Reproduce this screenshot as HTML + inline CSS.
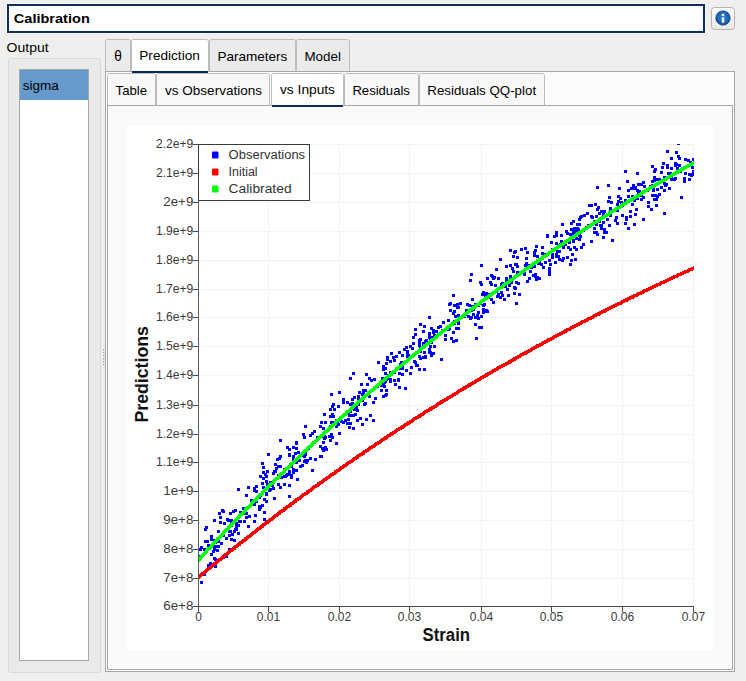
<!DOCTYPE html>
<html><head><meta charset="utf-8">
<style>
html,body{margin:0;padding:0;background:#efefef;width:746px;height:681px;overflow:hidden;}
svg{position:absolute;left:0;top:0;display:block;}
text{font-family:"Liberation Sans",sans-serif;}
.ui{font-size:13px;fill:#000;}
.tk{font-size:12px;fill:#3a3a3a;}
.lg{font-size:12px;fill:#333;}
.ttl{font-size:19.2px;font-weight:bold;fill:#111;}
</style></head>
<body>
<svg width="746" height="681" viewBox="0 0 746 681">
<defs>
<linearGradient id="btn" x1="0" y1="0" x2="0" y2="1"><stop offset="0" stop-color="#fbfbfb"/><stop offset="1" stop-color="#e8e8e8"/></linearGradient>
<radialGradient id="ico" cx="0.5" cy="0.45" r="0.6"><stop offset="0" stop-color="#3a86d6"/><stop offset="0.65" stop-color="#1c64b6"/><stop offset="1" stop-color="#0d4590"/></radialGradient>
</defs>
<!-- line edit -->
<rect x="6.5" y="3.5" width="699" height="30" fill="none" stroke="#fafafa"/>
<rect x="8" y="5" width="696" height="27" fill="#ffffff" stroke="#0a2e62" stroke-width="2"/>
<text x="13.8" y="23" class="ui" style="font-weight:bold;font-size:13.5px;fill:#000" textLength="76" lengthAdjust="spacingAndGlyphs">Calibration</text>
<!-- info button -->
<rect x="711.5" y="7.5" width="23" height="22" rx="3" fill="url(#btn)" stroke="#b4b4b4"/>
<circle cx="723" cy="18" r="7.1" fill="url(#ico)" stroke="#0b3a7e" stroke-width="0.9"/>
<rect x="721.8" y="17.4" width="2.4" height="5.3" fill="#fff"/>
<rect x="721.8" y="13.8" width="2.4" height="2.3" rx="0.6" fill="#fff"/>
<!-- Output -->
<text x="6.6" y="52" class="ui" textLength="42" lengthAdjust="spacingAndGlyphs">Output</text>
<rect x="8.5" y="58.5" width="92" height="614" rx="2" fill="#eaeaea" stroke="#d8d8d8"/>
<rect x="19.5" y="69.5" width="69" height="591" fill="#ffffff" stroke="#a8a8a8"/>
<rect x="20" y="70" width="68" height="30" fill="#6699cc"/>
<text x="22.8" y="90" class="ui" textLength="36" lengthAdjust="spacingAndGlyphs">sigma</text>
<!-- splitter dots -->
<g fill="#9a9a9a"><rect x="103" y="349" width="1.3" height="1.3"/><rect x="103" y="352" width="1.3" height="1.3"/><rect x="103" y="355" width="1.3" height="1.3"/><rect x="103" y="358" width="1.3" height="1.3"/><rect x="103" y="361" width="1.3" height="1.3"/><rect x="103" y="364" width="1.3" height="1.3"/></g>
<!-- outer tab widget pane -->
<rect x="105.5" y="71.5" width="629" height="600" fill="#fcfcfc" stroke="#a6a6a6"/>
<!-- outer tabs -->
<path d="M105.5 72 V41.5 a2 2 0 0 1 2 -2 H128.5 a2 2 0 0 1 2 2 V72" fill="#ebebeb" stroke="#bcbcbc"/>
<path d="M209.5 72 V41.5 a2 2 0 0 1 2 -2 H293.5 a2 2 0 0 1 2 2 V72" fill="#ebebeb" stroke="#bcbcbc"/>
<path d="M296.5 72 V41.5 a2 2 0 0 1 2 -2 H347.5 a2 2 0 0 1 2 2 V72" fill="#ebebeb" stroke="#bcbcbc"/>
<rect x="105" y="71" width="629" height="1" fill="#a6a6a6"/>
<path d="M131.5 72 V41.5 a2 2 0 0 1 2 -2 H206.5 a2 2 0 0 1 2 2 V72" fill="#ffffff" stroke="#bcbcbc"/>
<rect x="132" y="71" width="76" height="2" fill="#0b2b5e"/>
<text x="114.2" y="60.8" class="ui" style="font-size:14.2px" textLength="7.6" lengthAdjust="spacingAndGlyphs">θ</text>
<text x="139.3" y="60" class="ui" textLength="60.5" lengthAdjust="spacingAndGlyphs">Prediction</text>
<text x="217.4" y="61" class="ui" textLength="70" lengthAdjust="spacingAndGlyphs">Parameters</text>
<text x="304.4" y="61" class="ui" textLength="36.5" lengthAdjust="spacingAndGlyphs">Model</text>
<!-- inner tab widget pane -->
<rect x="107.5" y="105.5" width="625" height="564" fill="#fafafa" stroke="#a6a6a6"/>
<path d="M107.5 106 V75.5 a2 2 0 0 1 2 -2 H153.5 a2 2 0 0 1 2 2 V106" fill="#f8f8f8" stroke="#bcbcbc"/>
<path d="M156.5 106 V75.5 a2 2 0 0 1 2 -2 H267.5 a2 2 0 0 1 2 2 V106" fill="#f8f8f8" stroke="#bcbcbc"/>
<path d="M344.5 106 V75.5 a2 2 0 0 1 2 -2 H416.5 a2 2 0 0 1 2 2 V106" fill="#f8f8f8" stroke="#bcbcbc"/>
<path d="M419.5 106 V75.5 a2 2 0 0 1 2 -2 H542.5 a2 2 0 0 1 2 2 V106" fill="#f8f8f8" stroke="#bcbcbc"/>
<rect x="107" y="105" width="625" height="1" fill="#a6a6a6"/>
<path d="M271.5 106 V75.5 a2 2 0 0 1 2 -2 H341.5 a2 2 0 0 1 2 2 V106" fill="#ffffff" stroke="#bcbcbc"/>
<rect x="272" y="105" width="71" height="2" fill="#0b2b5e"/>
<text x="115.6" y="95" class="ui" textLength="31.5" lengthAdjust="spacingAndGlyphs">Table</text>
<text x="165" y="95" class="ui" textLength="97" lengthAdjust="spacingAndGlyphs">vs Observations</text>
<text x="280" y="94" class="ui" textLength="55" lengthAdjust="spacingAndGlyphs">vs Inputs</text>
<text x="352.4" y="95" class="ui" textLength="57.5" lengthAdjust="spacingAndGlyphs">Residuals</text>
<text x="427.3" y="95" class="ui" textLength="108.8" lengthAdjust="spacingAndGlyphs">Residuals QQ-plot</text>
<!-- chart -->
<rect x="127" y="125" width="586" height="526" fill="#ffffff"/>
<rect x="268" y="144" width="1" height="462" fill="#f3f3f3"/>
<rect x="339" y="144" width="1" height="462" fill="#f3f3f3"/>
<rect x="409" y="144" width="1" height="462" fill="#f3f3f3"/>
<rect x="481" y="144" width="1" height="462" fill="#f3f3f3"/>
<rect x="551" y="144" width="1" height="462" fill="#f3f3f3"/>
<rect x="622" y="144" width="1" height="462" fill="#f3f3f3"/>
<rect x="693" y="144" width="1" height="462" fill="#f3f3f3"/>
<rect x="198" y="606" width="496" height="1" fill="#f3f3f3"/>
<rect x="198" y="578" width="496" height="1" fill="#f3f3f3"/>
<rect x="198" y="549" width="496" height="1" fill="#f3f3f3"/>
<rect x="198" y="520" width="496" height="1" fill="#f3f3f3"/>
<rect x="198" y="491" width="496" height="1" fill="#f3f3f3"/>
<rect x="198" y="462" width="496" height="1" fill="#f3f3f3"/>
<rect x="198" y="434" width="496" height="1" fill="#f3f3f3"/>
<rect x="198" y="405" width="496" height="1" fill="#f3f3f3"/>
<rect x="198" y="375" width="496" height="1" fill="#f3f3f3"/>
<rect x="198" y="346" width="496" height="1" fill="#f3f3f3"/>
<rect x="198" y="317" width="496" height="1" fill="#f3f3f3"/>
<rect x="198" y="289" width="496" height="1" fill="#f3f3f3"/>
<rect x="198" y="260" width="496" height="1" fill="#f3f3f3"/>
<rect x="198" y="231" width="496" height="1" fill="#f3f3f3"/>
<rect x="198" y="202" width="496" height="1" fill="#f3f3f3"/>
<rect x="198" y="173" width="496" height="1" fill="#f3f3f3"/>
<rect x="198" y="144" width="496" height="1" fill="#f3f3f3"/>
<clipPath id="pc"><rect x="198" y="144" width="496" height="462"/></clipPath>
<g clip-path="url(#pc)">
<path shape-rendering="crispEdges" fill="#0000ff" d="M507 294h3v3h-3zM642 196h3v3h-3zM582 229h3v3h-3zM309 457h3v3h-3zM346 422h3v3h-3zM631 203h3v3h-3zM200 581h3v3h-3zM605 231h3v3h-3zM593 227h3v3h-3zM429 338h3v3h-3zM347 412h3v3h-3zM335 442h3v3h-3zM323 437h3v3h-3zM418 339h3v3h-3zM447 319h3v3h-3zM472 308h3v3h-3zM691 173h3v3h-3zM590 215h3v3h-3zM506 288h3v3h-3zM688 178h3v3h-3zM304 459h3v3h-3zM276 458h3v3h-3zM501 282h3v3h-3zM219 521h3v3h-3zM215 545h3v3h-3zM453 310h3v3h-3zM428 348h3v3h-3zM652 186h3v3h-3zM509 249h3v3h-3zM452 312h3v3h-3zM444 334h3v3h-3zM320 435h3v3h-3zM203 548h3v3h-3zM292 446h3v3h-3zM540 263h3v3h-3zM296 478h3v3h-3zM380 384h3v3h-3zM199 556h3v3h-3zM609 210h3v3h-3zM274 463h3v3h-3zM330 421h3v3h-3zM634 186h3v3h-3zM450 337h3v3h-3zM617 195h3v3h-3zM514 250h3v3h-3zM565 230h3v3h-3zM242 507h3v3h-3zM466 309h3v3h-3zM449 302h3v3h-3zM629 210h3v3h-3zM376 385h3v3h-3zM494 284h3v3h-3zM226 518h3v3h-3zM389 378h3v3h-3zM357 397h3v3h-3zM271 484h3v3h-3zM602 214h3v3h-3zM385 378h3v3h-3zM683 180h3v3h-3zM490 293h3v3h-3zM497 277h3v3h-3zM514 287h3v3h-3zM533 265h3v3h-3zM272 472h3v3h-3zM415 364h3v3h-3zM316 436h3v3h-3zM397 379h3v3h-3zM245 494h3v3h-3zM677 142h3v3h-3zM304 425h3v3h-3zM530 266h3v3h-3zM346 401h3v3h-3zM631 196h3v3h-3zM526 266h3v3h-3zM262 471h3v3h-3zM616 222h3v3h-3zM666 164h3v3h-3zM646 189h3v3h-3zM480 283h3v3h-3zM269 481h3v3h-3zM292 468h3v3h-3zM658 178h3v3h-3zM471 298h3v3h-3zM287 466h3v3h-3zM636 189h3v3h-3zM515 281h3v3h-3zM480 326h3v3h-3zM384 367h3v3h-3zM401 354h3v3h-3zM316 436h3v3h-3zM216 537h3v3h-3zM632 184h3v3h-3zM429 345h3v3h-3zM469 317h3v3h-3zM357 403h3v3h-3zM570 222h3v3h-3zM209 562h3v3h-3zM382 365h3v3h-3zM212 550h3v3h-3zM258 508h3v3h-3zM677 155h3v3h-3zM523 270h3v3h-3zM409 372h3v3h-3zM457 322h3v3h-3zM630 187h3v3h-3zM368 377h3v3h-3zM490 298h3v3h-3zM536 255h3v3h-3zM373 378h3v3h-3zM455 327h3v3h-3zM577 228h3v3h-3zM648 187h3v3h-3zM272 487h3v3h-3zM660 186h3v3h-3zM199 555h3v3h-3zM571 236h3v3h-3zM599 224h3v3h-3zM265 493h3v3h-3zM405 346h3v3h-3zM602 213h3v3h-3zM204 540h3v3h-3zM509 264h3v3h-3zM591 216h3v3h-3zM452 294h3v3h-3zM557 255h3v3h-3zM309 434h3v3h-3zM295 461h3v3h-3zM377 361h3v3h-3zM286 446h3v3h-3zM369 414h3v3h-3zM668 187h3v3h-3zM482 291h3v3h-3zM366 383h3v3h-3zM332 415h3v3h-3zM670 175h3v3h-3zM418 344h3v3h-3zM684 158h3v3h-3zM453 322h3v3h-3zM456 306h3v3h-3zM642 218h3v3h-3zM566 232h3v3h-3zM485 309h3v3h-3zM409 345h3v3h-3zM633 199h3v3h-3zM401 373h3v3h-3zM655 178h3v3h-3zM231 533h3v3h-3zM410 366h3v3h-3zM455 339h3v3h-3zM669 175h3v3h-3zM322 427h3v3h-3zM597 206h3v3h-3zM533 264h3v3h-3zM553 235h3v3h-3zM509 278h3v3h-3zM679 170h3v3h-3zM362 389h3v3h-3zM395 355h3v3h-3zM298 459h3v3h-3zM222 534h3v3h-3zM303 453h3v3h-3zM651 184h3v3h-3zM614 219h3v3h-3zM253 487h3v3h-3zM497 293h3v3h-3zM435 330h3v3h-3zM492 301h3v3h-3zM524 264h3v3h-3zM349 403h3v3h-3zM674 177h3v3h-3zM428 316h3v3h-3zM509 275h3v3h-3zM512 255h3v3h-3zM288 453h3v3h-3zM228 534h3v3h-3zM401 367h3v3h-3zM576 227h3v3h-3zM602 215h3v3h-3zM559 243h3v3h-3zM253 503h3v3h-3zM650 208h3v3h-3zM595 223h3v3h-3zM633 223h3v3h-3zM457 314h3v3h-3zM651 194h3v3h-3zM220 542h3v3h-3zM212 545h3v3h-3zM207 544h3v3h-3zM322 449h3v3h-3zM320 455h3v3h-3zM290 476h3v3h-3zM478 326h3v3h-3zM216 549h3v3h-3zM490 274h3v3h-3zM279 486h3v3h-3zM533 254h3v3h-3zM207 564h3v3h-3zM351 402h3v3h-3zM663 182h3v3h-3zM464 313h3v3h-3zM600 210h3v3h-3zM524 247h3v3h-3zM500 283h3v3h-3zM292 459h3v3h-3zM482 311h3v3h-3zM217 530h3v3h-3zM595 223h3v3h-3zM674 162h3v3h-3zM621 204h3v3h-3zM222 510h3v3h-3zM365 418h3v3h-3zM355 406h3v3h-3zM253 489h3v3h-3zM508 284h3v3h-3zM593 231h3v3h-3zM353 408h3v3h-3zM625 218h3v3h-3zM593 220h3v3h-3zM261 462h3v3h-3zM578 218h3v3h-3zM635 208h3v3h-3zM295 469h3v3h-3zM482 304h3v3h-3zM514 263h3v3h-3zM499 296h3v3h-3zM245 516h3v3h-3zM525 257h3v3h-3zM511 267h3v3h-3zM606 218h3v3h-3zM596 233h3v3h-3zM359 417h3v3h-3zM555 255h3v3h-3zM627 227h3v3h-3zM640 183h3v3h-3zM277 483h3v3h-3zM210 538h3v3h-3zM520 248h3v3h-3zM303 436h3v3h-3zM477 317h3v3h-3zM666 166h3v3h-3zM385 362h3v3h-3zM322 441h3v3h-3zM424 356h3v3h-3zM523 270h3v3h-3zM247 525h3v3h-3zM386 358h3v3h-3zM263 518h3v3h-3zM526 280h3v3h-3zM609 214h3v3h-3zM384 380h3v3h-3zM381 377h3v3h-3zM465 309h3v3h-3zM304 452h3v3h-3zM320 421h3v3h-3zM361 423h3v3h-3zM424 344h3v3h-3zM237 524h3v3h-3zM571 234h3v3h-3zM484 294h3v3h-3zM346 422h3v3h-3zM235 525h3v3h-3zM576 223h3v3h-3zM262 486h3v3h-3zM263 498h3v3h-3zM262 466h3v3h-3zM237 488h3v3h-3zM647 205h3v3h-3zM331 421h3v3h-3zM349 377h3v3h-3zM610 201h3v3h-3zM505 279h3v3h-3zM290 465h3v3h-3zM413 360h3v3h-3zM636 197h3v3h-3zM383 385h3v3h-3zM550 241h3v3h-3zM245 512h3v3h-3zM558 250h3v3h-3zM582 243h3v3h-3zM607 213h3v3h-3zM532 274h3v3h-3zM381 382h3v3h-3zM229 512h3v3h-3zM454 315h3v3h-3zM573 228h3v3h-3zM292 457h3v3h-3zM329 425h3v3h-3zM463 315h3v3h-3zM568 241h3v3h-3zM642 181h3v3h-3zM259 506h3v3h-3zM288 448h3v3h-3zM594 220h3v3h-3zM517 282h3v3h-3zM555 253h3v3h-3zM692 170h3v3h-3zM663 176h3v3h-3zM615 216h3v3h-3zM583 214h3v3h-3zM393 379h3v3h-3zM515 302h3v3h-3zM288 473h3v3h-3zM574 258h3v3h-3zM573 235h3v3h-3zM555 234h3v3h-3zM418 341h3v3h-3zM385 393h3v3h-3zM405 369h3v3h-3zM213 519h3v3h-3zM616 203h3v3h-3zM466 311h3v3h-3zM389 360h3v3h-3zM469 279h3v3h-3zM555 231h3v3h-3zM386 374h3v3h-3zM609 207h3v3h-3zM653 176h3v3h-3zM389 380h3v3h-3zM265 500h3v3h-3zM574 233h3v3h-3zM690 174h3v3h-3zM270 483h3v3h-3zM551 248h3v3h-3zM607 184h3v3h-3zM654 194h3v3h-3zM258 496h3v3h-3zM242 512h3v3h-3zM687 159h3v3h-3zM255 485h3v3h-3zM285 474h3v3h-3zM482 308h3v3h-3zM418 368h3v3h-3zM569 248h3v3h-3zM292 455h3v3h-3zM651 185h3v3h-3zM305 461h3v3h-3zM579 235h3v3h-3zM230 522h3v3h-3zM432 331h3v3h-3zM213 548h3v3h-3zM353 408h3v3h-3zM352 427h3v3h-3zM554 261h3v3h-3zM423 325h3v3h-3zM225 555h3v3h-3zM691 166h3v3h-3zM638 190h3v3h-3zM652 189h3v3h-3zM319 445h3v3h-3zM393 371h3v3h-3zM310 444h3v3h-3zM259 494h3v3h-3zM213 564h3v3h-3zM447 328h3v3h-3zM258 505h3v3h-3zM284 475h3v3h-3zM624 199h3v3h-3zM437 326h3v3h-3zM288 454h3v3h-3zM529 270h3v3h-3zM329 415h3v3h-3zM459 302h3v3h-3zM337 405h3v3h-3zM453 304h3v3h-3zM509 281h3v3h-3zM463 315h3v3h-3zM393 359h3v3h-3zM590 240h3v3h-3zM631 195h3v3h-3zM286 473h3v3h-3zM265 492h3v3h-3zM253 520h3v3h-3zM683 177h3v3h-3zM664 178h3v3h-3zM311 432h3v3h-3zM678 157h3v3h-3zM300 454h3v3h-3zM448 327h3v3h-3zM444 338h3v3h-3zM651 180h3v3h-3zM217 540h3v3h-3zM353 396h3v3h-3zM495 268h3v3h-3zM230 524h3v3h-3zM314 458h3v3h-3zM428 351h3v3h-3zM634 213h3v3h-3zM575 248h3v3h-3zM608 196h3v3h-3zM575 231h3v3h-3zM548 270h3v3h-3zM619 197h3v3h-3zM535 245h3v3h-3zM562 246h3v3h-3zM347 418h3v3h-3zM280 476h3v3h-3zM572 231h3v3h-3zM279 465h3v3h-3zM653 170h3v3h-3zM493 276h3v3h-3zM360 383h3v3h-3zM662 162h3v3h-3zM274 470h3v3h-3zM452 340h3v3h-3zM242 512h3v3h-3zM676 167h3v3h-3zM483 303h3v3h-3zM596 208h3v3h-3zM337 423h3v3h-3zM595 231h3v3h-3zM546 235h3v3h-3zM516 265h3v3h-3zM669 172h3v3h-3zM412 342h3v3h-3zM403 348h3v3h-3zM541 252h3v3h-3zM611 239h3v3h-3zM363 403h3v3h-3zM529 270h3v3h-3zM301 464h3v3h-3zM471 305h3v3h-3zM579 216h3v3h-3zM229 530h3v3h-3zM558 258h3v3h-3zM205 526h3v3h-3zM673 178h3v3h-3zM430 354h3v3h-3zM400 361h3v3h-3zM555 242h3v3h-3zM457 327h3v3h-3zM560 234h3v3h-3zM239 520h3v3h-3zM476 314h3v3h-3zM474 303h3v3h-3zM660 171h3v3h-3zM217 545h3v3h-3zM422 342h3v3h-3zM510 279h3v3h-3zM470 273h3v3h-3zM234 528h3v3h-3zM491 275h3v3h-3zM307 447h3v3h-3zM294 460h3v3h-3zM633 187h3v3h-3zM295 447h3v3h-3zM422 330h3v3h-3zM569 233h3v3h-3zM548 259h3v3h-3zM472 313h3v3h-3zM598 212h3v3h-3zM428 334h3v3h-3zM505 265h3v3h-3zM603 210h3v3h-3zM534 249h3v3h-3zM516 256h3v3h-3zM399 363h3v3h-3zM474 323h3v3h-3zM394 383h3v3h-3zM566 256h3v3h-3zM386 356h3v3h-3zM429 351h3v3h-3zM572 220h3v3h-3zM447 319h3v3h-3zM365 373h3v3h-3zM607 200h3v3h-3zM386 377h3v3h-3zM616 209h3v3h-3zM587 224h3v3h-3zM419 346h3v3h-3zM551 256h3v3h-3zM214 540h3v3h-3zM390 352h3v3h-3zM624 222h3v3h-3zM485 294h3v3h-3zM474 316h3v3h-3zM527 264h3v3h-3zM533 251h3v3h-3zM487 296h3v3h-3zM406 350h3v3h-3zM288 484h3v3h-3zM342 401h3v3h-3zM342 421h3v3h-3zM411 347h3v3h-3zM693 159h3v3h-3zM372 419h3v3h-3zM419 357h3v3h-3zM381 377h3v3h-3zM486 277h3v3h-3zM667 172h3v3h-3zM638 190h3v3h-3zM384 394h3v3h-3zM329 408h3v3h-3zM636 172h3v3h-3zM442 329h3v3h-3zM537 262h3v3h-3zM233 539h3v3h-3zM627 189h3v3h-3zM352 372h3v3h-3zM442 321h3v3h-3zM295 442h3v3h-3zM406 353h3v3h-3zM608 224h3v3h-3zM608 196h3v3h-3zM432 352h3v3h-3zM578 234h3v3h-3zM424 340h3v3h-3zM382 368h3v3h-3zM468 304h3v3h-3zM297 451h3v3h-3zM354 413h3v3h-3zM548 267h3v3h-3zM579 230h3v3h-3zM225 537h3v3h-3zM561 259h3v3h-3zM603 231h3v3h-3zM418 355h3v3h-3zM228 548h3v3h-3zM536 276h3v3h-3zM319 455h3v3h-3zM516 271h3v3h-3zM384 372h3v3h-3zM513 251h3v3h-3zM325 448h3v3h-3zM433 345h3v3h-3zM457 306h3v3h-3zM510 281h3v3h-3zM298 459h3v3h-3zM675 151h3v3h-3zM340 420h3v3h-3zM349 422h3v3h-3zM324 446h3v3h-3zM230 519h3v3h-3zM407 354h3v3h-3zM580 246h3v3h-3zM549 263h3v3h-3zM294 452h3v3h-3zM265 480h3v3h-3zM356 409h3v3h-3zM578 223h3v3h-3zM439 325h3v3h-3zM655 204h3v3h-3zM523 273h3v3h-3zM505 277h3v3h-3zM578 238h3v3h-3zM569 263h3v3h-3zM368 395h3v3h-3zM324 421h3v3h-3zM414 333h3v3h-3zM440 358h3v3h-3zM267 453h3v3h-3zM416 364h3v3h-3zM515 263h3v3h-3zM264 473h3v3h-3zM265 475h3v3h-3zM283 468h3v3h-3zM338 432h3v3h-3zM674 164h3v3h-3zM210 553h3v3h-3zM288 495h3v3h-3zM279 439h3v3h-3zM432 329h3v3h-3zM204 528h3v3h-3zM424 355h3v3h-3zM278 457h3v3h-3zM331 405h3v3h-3zM590 204h3v3h-3zM288 465h3v3h-3zM503 298h3v3h-3zM399 367h3v3h-3zM404 387h3v3h-3zM602 236h3v3h-3zM277 474h3v3h-3zM656 195h3v3h-3zM640 194h3v3h-3zM529 266h3v3h-3zM221 509h3v3h-3zM526 251h3v3h-3zM495 290h3v3h-3zM580 215h3v3h-3zM303 460h3v3h-3zM670 178h3v3h-3zM637 183h3v3h-3zM254 514h3v3h-3zM353 407h3v3h-3zM213 557h3v3h-3zM609 209h3v3h-3zM651 165h3v3h-3zM688 173h3v3h-3zM501 282h3v3h-3zM528 277h3v3h-3zM534 275h3v3h-3zM480 315h3v3h-3zM670 157h3v3h-3zM499 258h3v3h-3zM364 389h3v3h-3zM452 331h3v3h-3zM206 540h3v3h-3zM556 250h3v3h-3zM541 246h3v3h-3zM406 355h3v3h-3zM620 201h3v3h-3zM572 228h3v3h-3zM364 402h3v3h-3zM235 522h3v3h-3zM263 511h3v3h-3zM288 470h3v3h-3zM348 426h3v3h-3zM419 350h3v3h-3zM658 193h3v3h-3zM335 419h3v3h-3zM643 185h3v3h-3zM535 278h3v3h-3zM621 214h3v3h-3zM397 378h3v3h-3zM199 548h3v3h-3zM588 204h3v3h-3zM319 425h3v3h-3zM268 489h3v3h-3zM594 203h3v3h-3zM538 277h3v3h-3zM302 433h3v3h-3zM330 433h3v3h-3zM663 212h3v3h-3zM330 393h3v3h-3zM546 234h3v3h-3zM261 504h3v3h-3zM602 214h3v3h-3zM255 500h3v3h-3zM453 320h3v3h-3zM214 558h3v3h-3zM470 316h3v3h-3zM617 200h3v3h-3zM239 511h3v3h-3zM333 408h3v3h-3zM577 231h3v3h-3zM499 258h3v3h-3zM352 414h3v3h-3zM509 276h3v3h-3zM423 368h3v3h-3zM625 216h3v3h-3zM342 398h3v3h-3zM573 246h3v3h-3zM512 270h3v3h-3zM564 241h3v3h-3zM385 389h3v3h-3zM557 250h3v3h-3zM544 261h3v3h-3zM389 379h3v3h-3zM210 535h3v3h-3zM675 163h3v3h-3zM551 256h3v3h-3zM299 465h3v3h-3zM560 240h3v3h-3zM335 421h3v3h-3zM430 327h3v3h-3zM624 170h3v3h-3zM419 338h3v3h-3zM340 416h3v3h-3zM349 410h3v3h-3zM235 528h3v3h-3zM306 459h3v3h-3zM331 436h3v3h-3zM283 475h3v3h-3zM228 530h3v3h-3zM428 332h3v3h-3zM303 455h3v3h-3zM564 243h3v3h-3zM655 198h3v3h-3zM332 403h3v3h-3zM481 293h3v3h-3zM448 303h3v3h-3zM234 509h3v3h-3zM259 475h3v3h-3zM636 197h3v3h-3zM432 329h3v3h-3zM596 186h3v3h-3zM230 538h3v3h-3zM492 277h3v3h-3zM626 180h3v3h-3zM627 195h3v3h-3zM200 546h3v3h-3zM456 303h3v3h-3zM380 389h3v3h-3zM574 229h3v3h-3zM233 530h3v3h-3zM328 435h3v3h-3zM600 224h3v3h-3zM430 341h3v3h-3zM422 344h3v3h-3zM678 164h3v3h-3zM356 419h3v3h-3zM218 512h3v3h-3zM392 356h3v3h-3zM273 470h3v3h-3zM238 520h3v3h-3zM479 302h3v3h-3zM670 167h3v3h-3zM485 292h3v3h-3zM518 293h3v3h-3zM358 391h3v3h-3zM480 264h3v3h-3zM570 259h3v3h-3zM489 281h3v3h-3zM595 215h3v3h-3zM470 309h3v3h-3zM295 441h3v3h-3zM486 310h3v3h-3zM441 329h3v3h-3zM279 455h3v3h-3zM504 285h3v3h-3zM602 221h3v3h-3zM264 487h3v3h-3zM467 315h3v3h-3zM561 223h3v3h-3zM397 378h3v3h-3zM331 413h3v3h-3zM382 395h3v3h-3zM466 303h3v3h-3zM538 260h3v3h-3zM475 337h3v3h-3zM250 502h3v3h-3zM603 228h3v3h-3zM656 188h3v3h-3zM247 486h3v3h-3zM321 447h3v3h-3zM283 483h3v3h-3zM618 187h3v3h-3zM649 185h3v3h-3zM219 516h3v3h-3zM362 392h3v3h-3zM292 471h3v3h-3zM430 340h3v3h-3zM654 168h3v3h-3zM232 510h3v3h-3zM282 471h3v3h-3zM439 332h3v3h-3zM457 319h3v3h-3zM567 246h3v3h-3zM414 328h3v3h-3zM267 485h3v3h-3zM372 401h3v3h-3zM684 172h3v3h-3zM570 228h3v3h-3zM255 490h3v3h-3zM598 220h3v3h-3zM351 414h3v3h-3zM585 226h3v3h-3zM203 573h3v3h-3zM629 215h3v3h-3zM277 465h3v3h-3zM423 351h3v3h-3zM525 262h3v3h-3zM449 309h3v3h-3zM279 465h3v3h-3zM266 486h3v3h-3zM338 391h3v3h-3zM223 522h3v3h-3zM304 453h3v3h-3zM261 482h3v3h-3zM428 336h3v3h-3zM374 397h3v3h-3zM488 293h3v3h-3zM336 421h3v3h-3zM214 565h3v3h-3zM361 399h3v3h-3zM572 239h3v3h-3zM324 436h3v3h-3zM398 386h3v3h-3zM572 240h3v3h-3zM399 365h3v3h-3zM637 192h3v3h-3zM653 198h3v3h-3zM351 398h3v3h-3zM562 257h3v3h-3zM323 435h3v3h-3zM266 470h3v3h-3zM414 361h3v3h-3zM496 295h3v3h-3zM661 166h3v3h-3zM269 488h3v3h-3zM551 253h3v3h-3zM433 334h3v3h-3zM262 477h3v3h-3zM680 196h3v3h-3zM542 266h3v3h-3zM261 504h3v3h-3zM647 201h3v3h-3zM248 515h3v3h-3zM243 520h3v3h-3zM361 393h3v3h-3zM663 189h3v3h-3zM213 539h3v3h-3zM653 179h3v3h-3zM501 294h3v3h-3zM230 521h3v3h-3zM479 281h3v3h-3zM425 339h3v3h-3zM477 311h3v3h-3zM563 242h3v3h-3zM534 273h3v3h-3zM692 158h3v3h-3zM275 467h3v3h-3zM600 227h3v3h-3zM401 365h3v3h-3zM586 212h3v3h-3zM640 198h3v3h-3zM689 161h3v3h-3zM329 439h3v3h-3zM422 356h3v3h-3zM665 183h3v3h-3zM666 150h3v3h-3zM382 384h3v3h-3zM664 184h3v3h-3zM398 372h3v3h-3zM383 380h3v3h-3zM573 227h3v3h-3zM431 336h3v3h-3zM419 323h3v3h-3zM389 371h3v3h-3zM412 336h3v3h-3zM266 483h3v3h-3zM227 519h3v3h-3zM571 253h3v3h-3zM477 304h3v3h-3zM530 264h3v3h-3zM595 223h3v3h-3zM311 469h3v3h-3zM313 430h3v3h-3zM335 425h3v3h-3zM348 414h3v3h-3zM575 237h3v3h-3zM383 381h3v3h-3zM357 395h3v3h-3zM513 292h3v3h-3zM290 474h3v3h-3zM250 499h3v3h-3zM543 253h3v3h-3zM572 239h3v3h-3zM344 419h3v3h-3zM513 286h3v3h-3zM214 541h3v3h-3zM398 351h3v3h-3zM484 310h3v3h-3zM323 413h3v3h-3zM370 379h3v3h-3zM500 291h3v3h-3zM490 283h3v3h-3zM273 497h3v3h-3zM548 273h3v3h-3zM237 532h3v3h-3z"/>
<path shape-rendering="crispEdges" fill="#ff0000" d="M197 576h3v3h-3zM198 575h3v3h-3zM199 574h3v3h-3zM199 574h3v3h-3zM200 573h3v3h-3zM201 572h3v3h-3zM202 572h3v3h-3zM203 571h3v3h-3zM204 570h3v3h-3zM205 569h3v3h-3zM205 569h3v3h-3zM206 568h3v3h-3zM207 567h3v3h-3zM208 567h3v3h-3zM209 566h3v3h-3zM210 565h3v3h-3zM210 565h3v3h-3zM211 564h3v3h-3zM212 563h3v3h-3zM213 562h3v3h-3zM214 562h3v3h-3zM215 561h3v3h-3zM216 560h3v3h-3zM216 560h3v3h-3zM217 559h3v3h-3zM218 558h3v3h-3zM219 558h3v3h-3zM220 557h3v3h-3zM221 556h3v3h-3zM222 556h3v3h-3zM222 555h3v3h-3zM223 554h3v3h-3zM224 553h3v3h-3zM225 553h3v3h-3zM226 552h3v3h-3zM227 551h3v3h-3zM227 551h3v3h-3zM228 550h3v3h-3zM229 549h3v3h-3zM230 549h3v3h-3zM231 548h3v3h-3zM232 547h3v3h-3zM233 547h3v3h-3zM233 546h3v3h-3zM234 545h3v3h-3zM235 545h3v3h-3zM236 544h3v3h-3zM237 543h3v3h-3zM238 543h3v3h-3zM238 542h3v3h-3zM239 541h3v3h-3zM240 541h3v3h-3zM241 540h3v3h-3zM242 539h3v3h-3zM243 539h3v3h-3zM244 538h3v3h-3zM244 537h3v3h-3zM245 537h3v3h-3zM246 536h3v3h-3zM247 535h3v3h-3zM248 535h3v3h-3zM249 534h3v3h-3zM250 533h3v3h-3zM250 533h3v3h-3zM251 532h3v3h-3zM252 531h3v3h-3zM253 531h3v3h-3zM254 530h3v3h-3zM255 529h3v3h-3zM255 529h3v3h-3zM256 528h3v3h-3zM257 527h3v3h-3zM258 527h3v3h-3zM259 526h3v3h-3zM260 525h3v3h-3zM261 525h3v3h-3zM261 524h3v3h-3zM262 523h3v3h-3zM263 523h3v3h-3zM264 522h3v3h-3zM265 521h3v3h-3zM266 521h3v3h-3zM266 520h3v3h-3zM267 520h3v3h-3zM268 519h3v3h-3zM269 518h3v3h-3zM270 518h3v3h-3zM271 517h3v3h-3zM272 516h3v3h-3zM272 516h3v3h-3zM273 515h3v3h-3zM274 514h3v3h-3zM275 514h3v3h-3zM276 513h3v3h-3zM277 512h3v3h-3zM278 512h3v3h-3zM278 511h3v3h-3zM279 510h3v3h-3zM280 510h3v3h-3zM281 509h3v3h-3zM282 509h3v3h-3zM283 508h3v3h-3zM283 507h3v3h-3zM284 507h3v3h-3zM285 506h3v3h-3zM286 505h3v3h-3zM287 505h3v3h-3zM288 504h3v3h-3zM289 504h3v3h-3zM289 503h3v3h-3zM290 502h3v3h-3zM291 502h3v3h-3zM292 501h3v3h-3zM293 500h3v3h-3zM294 500h3v3h-3zM294 499h3v3h-3zM295 498h3v3h-3zM296 498h3v3h-3zM297 497h3v3h-3zM298 497h3v3h-3zM299 496h3v3h-3zM300 495h3v3h-3zM300 495h3v3h-3zM301 494h3v3h-3zM302 493h3v3h-3zM303 493h3v3h-3zM304 492h3v3h-3zM305 492h3v3h-3zM306 491h3v3h-3zM306 490h3v3h-3zM307 490h3v3h-3zM308 489h3v3h-3zM309 489h3v3h-3zM310 488h3v3h-3zM311 487h3v3h-3zM311 487h3v3h-3zM312 486h3v3h-3zM313 485h3v3h-3zM314 485h3v3h-3zM315 484h3v3h-3zM316 484h3v3h-3zM317 483h3v3h-3zM317 482h3v3h-3zM318 482h3v3h-3zM319 481h3v3h-3zM320 481h3v3h-3zM321 480h3v3h-3zM322 479h3v3h-3zM322 479h3v3h-3zM323 478h3v3h-3zM324 478h3v3h-3zM325 477h3v3h-3zM326 476h3v3h-3zM327 476h3v3h-3zM328 475h3v3h-3zM328 475h3v3h-3zM329 474h3v3h-3zM330 473h3v3h-3zM331 473h3v3h-3zM332 472h3v3h-3zM333 472h3v3h-3zM334 471h3v3h-3zM334 470h3v3h-3zM335 470h3v3h-3zM336 469h3v3h-3zM337 469h3v3h-3zM338 468h3v3h-3zM339 467h3v3h-3zM339 467h3v3h-3zM340 466h3v3h-3zM341 466h3v3h-3zM342 465h3v3h-3zM343 464h3v3h-3zM344 464h3v3h-3zM345 463h3v3h-3zM345 463h3v3h-3zM346 462h3v3h-3zM347 461h3v3h-3zM348 461h3v3h-3zM349 460h3v3h-3zM350 460h3v3h-3zM351 459h3v3h-3zM351 459h3v3h-3zM352 458h3v3h-3zM353 457h3v3h-3zM354 457h3v3h-3zM355 456h3v3h-3zM356 456h3v3h-3zM356 455h3v3h-3zM357 454h3v3h-3zM358 454h3v3h-3zM359 453h3v3h-3zM360 453h3v3h-3zM361 452h3v3h-3zM362 452h3v3h-3zM362 451h3v3h-3zM363 450h3v3h-3zM364 450h3v3h-3zM365 449h3v3h-3zM366 449h3v3h-3zM367 448h3v3h-3zM367 448h3v3h-3zM368 447h3v3h-3zM369 446h3v3h-3zM370 446h3v3h-3zM371 445h3v3h-3zM372 445h3v3h-3zM373 444h3v3h-3zM373 444h3v3h-3zM374 443h3v3h-3zM375 442h3v3h-3zM376 442h3v3h-3zM377 441h3v3h-3zM378 441h3v3h-3zM379 440h3v3h-3zM379 440h3v3h-3zM380 439h3v3h-3zM381 438h3v3h-3zM382 438h3v3h-3zM383 437h3v3h-3zM384 437h3v3h-3zM384 436h3v3h-3zM385 436h3v3h-3zM386 435h3v3h-3zM387 434h3v3h-3zM388 434h3v3h-3zM389 433h3v3h-3zM390 433h3v3h-3zM390 432h3v3h-3zM391 432h3v3h-3zM392 431h3v3h-3zM393 431h3v3h-3zM394 430h3v3h-3zM395 429h3v3h-3zM395 429h3v3h-3zM396 428h3v3h-3zM397 428h3v3h-3zM398 427h3v3h-3zM399 427h3v3h-3zM400 426h3v3h-3zM401 426h3v3h-3zM401 425h3v3h-3zM402 425h3v3h-3zM403 424h3v3h-3zM404 423h3v3h-3zM405 423h3v3h-3zM406 422h3v3h-3zM407 422h3v3h-3zM407 421h3v3h-3zM408 421h3v3h-3zM409 420h3v3h-3zM410 420h3v3h-3zM411 419h3v3h-3zM412 418h3v3h-3zM412 418h3v3h-3zM413 417h3v3h-3zM414 417h3v3h-3zM415 416h3v3h-3zM416 416h3v3h-3zM417 415h3v3h-3zM418 415h3v3h-3zM418 414h3v3h-3zM419 414h3v3h-3zM420 413h3v3h-3zM421 413h3v3h-3zM422 412h3v3h-3zM423 411h3v3h-3zM423 411h3v3h-3zM424 410h3v3h-3zM425 410h3v3h-3zM426 409h3v3h-3zM427 409h3v3h-3zM428 408h3v3h-3zM429 408h3v3h-3zM429 407h3v3h-3zM430 407h3v3h-3zM431 406h3v3h-3zM432 406h3v3h-3zM433 405h3v3h-3zM434 405h3v3h-3zM435 404h3v3h-3zM435 404h3v3h-3zM436 403h3v3h-3zM437 402h3v3h-3zM438 402h3v3h-3zM439 401h3v3h-3zM440 401h3v3h-3zM440 400h3v3h-3zM441 400h3v3h-3zM442 399h3v3h-3zM443 399h3v3h-3zM444 398h3v3h-3zM445 398h3v3h-3zM446 397h3v3h-3zM446 397h3v3h-3zM447 396h3v3h-3zM448 396h3v3h-3zM449 395h3v3h-3zM450 395h3v3h-3zM451 394h3v3h-3zM451 394h3v3h-3zM452 393h3v3h-3zM453 393h3v3h-3zM454 392h3v3h-3zM455 392h3v3h-3zM456 391h3v3h-3zM457 390h3v3h-3zM457 390h3v3h-3zM458 389h3v3h-3zM459 389h3v3h-3zM460 388h3v3h-3zM461 388h3v3h-3zM462 387h3v3h-3zM463 387h3v3h-3zM463 386h3v3h-3zM464 386h3v3h-3zM465 385h3v3h-3zM466 385h3v3h-3zM467 384h3v3h-3zM468 384h3v3h-3zM468 383h3v3h-3zM469 383h3v3h-3zM470 382h3v3h-3zM471 382h3v3h-3zM472 381h3v3h-3zM473 381h3v3h-3zM474 380h3v3h-3zM474 380h3v3h-3zM475 379h3v3h-3zM476 379h3v3h-3zM477 378h3v3h-3zM478 378h3v3h-3zM479 377h3v3h-3zM479 377h3v3h-3zM480 376h3v3h-3zM481 376h3v3h-3zM482 375h3v3h-3zM483 375h3v3h-3zM484 374h3v3h-3zM485 374h3v3h-3zM485 373h3v3h-3zM486 373h3v3h-3zM487 372h3v3h-3zM488 372h3v3h-3zM489 371h3v3h-3zM490 371h3v3h-3zM491 370h3v3h-3zM491 370h3v3h-3zM492 369h3v3h-3zM493 369h3v3h-3zM494 368h3v3h-3zM495 368h3v3h-3zM496 367h3v3h-3zM496 367h3v3h-3zM497 366h3v3h-3zM498 366h3v3h-3zM499 365h3v3h-3zM500 365h3v3h-3zM501 364h3v3h-3zM502 364h3v3h-3zM502 364h3v3h-3zM503 363h3v3h-3zM504 363h3v3h-3zM505 362h3v3h-3zM506 362h3v3h-3zM507 361h3v3h-3zM508 361h3v3h-3zM508 360h3v3h-3zM509 360h3v3h-3zM510 359h3v3h-3zM511 359h3v3h-3zM512 358h3v3h-3zM513 358h3v3h-3zM513 357h3v3h-3zM514 357h3v3h-3zM515 356h3v3h-3zM516 356h3v3h-3zM517 355h3v3h-3zM518 355h3v3h-3zM519 354h3v3h-3zM519 354h3v3h-3zM520 353h3v3h-3zM521 353h3v3h-3zM522 352h3v3h-3zM523 352h3v3h-3zM524 352h3v3h-3zM524 351h3v3h-3zM525 351h3v3h-3zM526 350h3v3h-3zM527 350h3v3h-3zM528 349h3v3h-3zM529 349h3v3h-3zM530 348h3v3h-3zM530 348h3v3h-3zM531 347h3v3h-3zM532 347h3v3h-3zM533 346h3v3h-3zM534 346h3v3h-3zM535 345h3v3h-3zM536 345h3v3h-3zM536 344h3v3h-3zM537 344h3v3h-3zM538 344h3v3h-3zM539 343h3v3h-3zM540 343h3v3h-3zM541 342h3v3h-3zM541 342h3v3h-3zM542 341h3v3h-3zM543 341h3v3h-3zM544 340h3v3h-3zM545 340h3v3h-3zM546 339h3v3h-3zM547 339h3v3h-3zM547 338h3v3h-3zM548 338h3v3h-3zM549 338h3v3h-3zM550 337h3v3h-3zM551 337h3v3h-3zM552 336h3v3h-3zM552 336h3v3h-3zM553 335h3v3h-3zM554 335h3v3h-3zM555 334h3v3h-3zM556 334h3v3h-3zM557 333h3v3h-3zM558 333h3v3h-3zM558 333h3v3h-3zM559 332h3v3h-3zM560 332h3v3h-3zM561 331h3v3h-3zM562 331h3v3h-3zM563 330h3v3h-3zM564 330h3v3h-3zM564 329h3v3h-3zM565 329h3v3h-3zM566 328h3v3h-3zM567 328h3v3h-3zM568 328h3v3h-3zM569 327h3v3h-3zM569 327h3v3h-3zM570 326h3v3h-3zM571 326h3v3h-3zM572 325h3v3h-3zM573 325h3v3h-3zM574 324h3v3h-3zM575 324h3v3h-3zM575 324h3v3h-3zM576 323h3v3h-3zM577 323h3v3h-3zM578 322h3v3h-3zM579 322h3v3h-3zM580 321h3v3h-3zM580 321h3v3h-3zM581 320h3v3h-3zM582 320h3v3h-3zM583 320h3v3h-3zM584 319h3v3h-3zM585 319h3v3h-3zM586 318h3v3h-3zM586 318h3v3h-3zM587 317h3v3h-3zM588 317h3v3h-3zM589 317h3v3h-3zM590 316h3v3h-3zM591 316h3v3h-3zM592 315h3v3h-3zM592 315h3v3h-3zM593 314h3v3h-3zM594 314h3v3h-3zM595 313h3v3h-3zM596 313h3v3h-3zM597 313h3v3h-3zM597 312h3v3h-3zM598 312h3v3h-3zM599 311h3v3h-3zM600 311h3v3h-3zM601 310h3v3h-3zM602 310h3v3h-3zM603 310h3v3h-3zM603 309h3v3h-3zM604 309h3v3h-3zM605 308h3v3h-3zM606 308h3v3h-3zM607 307h3v3h-3zM608 307h3v3h-3zM608 307h3v3h-3zM609 306h3v3h-3zM610 306h3v3h-3zM611 305h3v3h-3zM612 305h3v3h-3zM613 304h3v3h-3zM614 304h3v3h-3zM614 304h3v3h-3zM615 303h3v3h-3zM616 303h3v3h-3zM617 302h3v3h-3zM618 302h3v3h-3zM619 302h3v3h-3zM620 301h3v3h-3zM620 301h3v3h-3zM621 300h3v3h-3zM622 300h3v3h-3zM623 299h3v3h-3zM624 299h3v3h-3zM625 299h3v3h-3zM625 298h3v3h-3zM626 298h3v3h-3zM627 297h3v3h-3zM628 297h3v3h-3zM629 296h3v3h-3zM630 296h3v3h-3zM631 296h3v3h-3zM631 295h3v3h-3zM632 295h3v3h-3zM633 294h3v3h-3zM634 294h3v3h-3zM635 294h3v3h-3zM636 293h3v3h-3zM636 293h3v3h-3zM637 292h3v3h-3zM638 292h3v3h-3zM639 292h3v3h-3zM640 291h3v3h-3zM641 291h3v3h-3zM642 290h3v3h-3zM642 290h3v3h-3zM643 289h3v3h-3zM644 289h3v3h-3zM645 289h3v3h-3zM646 288h3v3h-3zM647 288h3v3h-3zM648 287h3v3h-3zM648 287h3v3h-3zM649 287h3v3h-3zM650 286h3v3h-3zM651 286h3v3h-3zM652 285h3v3h-3zM653 285h3v3h-3zM653 285h3v3h-3zM654 284h3v3h-3zM655 284h3v3h-3zM656 283h3v3h-3zM657 283h3v3h-3zM658 283h3v3h-3zM659 282h3v3h-3zM659 282h3v3h-3zM660 281h3v3h-3zM661 281h3v3h-3zM662 281h3v3h-3zM663 280h3v3h-3zM664 280h3v3h-3zM665 279h3v3h-3zM665 279h3v3h-3zM666 279h3v3h-3zM667 278h3v3h-3zM668 278h3v3h-3zM669 277h3v3h-3zM670 277h3v3h-3zM670 277h3v3h-3zM671 276h3v3h-3zM672 276h3v3h-3zM673 275h3v3h-3zM674 275h3v3h-3zM675 275h3v3h-3zM676 274h3v3h-3zM676 274h3v3h-3zM677 273h3v3h-3zM678 273h3v3h-3zM679 273h3v3h-3zM680 272h3v3h-3zM681 272h3v3h-3zM681 272h3v3h-3zM682 271h3v3h-3zM683 271h3v3h-3zM684 270h3v3h-3zM685 270h3v3h-3zM686 270h3v3h-3zM687 269h3v3h-3zM687 269h3v3h-3zM688 268h3v3h-3zM689 268h3v3h-3zM690 268h3v3h-3zM691 267h3v3h-3zM692 267h3v3h-3zM693 266h3v3h-3z"/>
<path shape-rendering="crispEdges" fill="#00ff00" d="M197 559h3v3h-3zM198 558h3v3h-3zM199 557h3v3h-3zM199 556h3v3h-3zM200 555h3v3h-3zM201 554h3v3h-3zM202 553h3v3h-3zM203 552h3v3h-3zM204 551h3v3h-3zM205 550h3v3h-3zM205 549h3v3h-3zM206 548h3v3h-3zM207 547h3v3h-3zM208 547h3v3h-3zM209 546h3v3h-3zM210 545h3v3h-3zM210 544h3v3h-3zM211 543h3v3h-3zM212 542h3v3h-3zM213 541h3v3h-3zM214 540h3v3h-3zM215 539h3v3h-3zM216 538h3v3h-3zM216 537h3v3h-3zM217 537h3v3h-3zM218 536h3v3h-3zM219 535h3v3h-3zM220 534h3v3h-3zM221 533h3v3h-3zM222 532h3v3h-3zM222 531h3v3h-3zM223 530h3v3h-3zM224 529h3v3h-3zM225 528h3v3h-3zM226 528h3v3h-3zM227 527h3v3h-3zM227 526h3v3h-3zM228 525h3v3h-3zM229 524h3v3h-3zM230 523h3v3h-3zM231 522h3v3h-3zM232 521h3v3h-3zM233 520h3v3h-3zM233 520h3v3h-3zM234 519h3v3h-3zM235 518h3v3h-3zM236 517h3v3h-3zM237 516h3v3h-3zM238 515h3v3h-3zM238 514h3v3h-3zM239 513h3v3h-3zM240 513h3v3h-3zM241 512h3v3h-3zM242 511h3v3h-3zM243 510h3v3h-3zM244 509h3v3h-3zM244 508h3v3h-3zM245 507h3v3h-3zM246 506h3v3h-3zM247 506h3v3h-3zM248 505h3v3h-3zM249 504h3v3h-3zM250 503h3v3h-3zM250 502h3v3h-3zM251 501h3v3h-3zM252 500h3v3h-3zM253 499h3v3h-3zM254 499h3v3h-3zM255 498h3v3h-3zM255 497h3v3h-3zM256 496h3v3h-3zM257 495h3v3h-3zM258 494h3v3h-3zM259 493h3v3h-3zM260 493h3v3h-3zM261 492h3v3h-3zM261 491h3v3h-3zM262 490h3v3h-3zM263 489h3v3h-3zM264 488h3v3h-3zM265 487h3v3h-3zM266 487h3v3h-3zM266 486h3v3h-3zM267 485h3v3h-3zM268 484h3v3h-3zM269 483h3v3h-3zM270 482h3v3h-3zM271 482h3v3h-3zM272 481h3v3h-3zM272 480h3v3h-3zM273 479h3v3h-3zM274 478h3v3h-3zM275 477h3v3h-3zM276 477h3v3h-3zM277 476h3v3h-3zM278 475h3v3h-3zM278 474h3v3h-3zM279 473h3v3h-3zM280 472h3v3h-3zM281 472h3v3h-3zM282 471h3v3h-3zM283 470h3v3h-3zM283 469h3v3h-3zM284 468h3v3h-3zM285 467h3v3h-3zM286 467h3v3h-3zM287 466h3v3h-3zM288 465h3v3h-3zM289 464h3v3h-3zM289 463h3v3h-3zM290 462h3v3h-3zM291 462h3v3h-3zM292 461h3v3h-3zM293 460h3v3h-3zM294 459h3v3h-3zM294 458h3v3h-3zM295 458h3v3h-3zM296 457h3v3h-3zM297 456h3v3h-3zM298 455h3v3h-3zM299 454h3v3h-3zM300 453h3v3h-3zM300 453h3v3h-3zM301 452h3v3h-3zM302 451h3v3h-3zM303 450h3v3h-3zM304 449h3v3h-3zM305 449h3v3h-3zM306 448h3v3h-3zM306 447h3v3h-3zM307 446h3v3h-3zM308 445h3v3h-3zM309 445h3v3h-3zM310 444h3v3h-3zM311 443h3v3h-3zM311 442h3v3h-3zM312 441h3v3h-3zM313 441h3v3h-3zM314 440h3v3h-3zM315 439h3v3h-3zM316 438h3v3h-3zM317 437h3v3h-3zM317 437h3v3h-3zM318 436h3v3h-3zM319 435h3v3h-3zM320 434h3v3h-3zM321 434h3v3h-3zM322 433h3v3h-3zM322 432h3v3h-3zM323 431h3v3h-3zM324 430h3v3h-3zM325 430h3v3h-3zM326 429h3v3h-3zM327 428h3v3h-3zM328 427h3v3h-3zM328 426h3v3h-3zM329 426h3v3h-3zM330 425h3v3h-3zM331 424h3v3h-3zM332 423h3v3h-3zM333 423h3v3h-3zM334 422h3v3h-3zM334 421h3v3h-3zM335 420h3v3h-3zM336 419h3v3h-3zM337 419h3v3h-3zM338 418h3v3h-3zM339 417h3v3h-3zM339 416h3v3h-3zM340 416h3v3h-3zM341 415h3v3h-3zM342 414h3v3h-3zM343 413h3v3h-3zM344 413h3v3h-3zM345 412h3v3h-3zM345 411h3v3h-3zM346 410h3v3h-3zM347 410h3v3h-3zM348 409h3v3h-3zM349 408h3v3h-3zM350 407h3v3h-3zM351 406h3v3h-3zM351 406h3v3h-3zM352 405h3v3h-3zM353 404h3v3h-3zM354 403h3v3h-3zM355 403h3v3h-3zM356 402h3v3h-3zM356 401h3v3h-3zM357 400h3v3h-3zM358 400h3v3h-3zM359 399h3v3h-3zM360 398h3v3h-3zM361 397h3v3h-3zM362 397h3v3h-3zM362 396h3v3h-3zM363 395h3v3h-3zM364 394h3v3h-3zM365 394h3v3h-3zM366 393h3v3h-3zM367 392h3v3h-3zM367 391h3v3h-3zM368 391h3v3h-3zM369 390h3v3h-3zM370 389h3v3h-3zM371 389h3v3h-3zM372 388h3v3h-3zM373 387h3v3h-3zM373 386h3v3h-3zM374 386h3v3h-3zM375 385h3v3h-3zM376 384h3v3h-3zM377 383h3v3h-3zM378 383h3v3h-3zM379 382h3v3h-3zM379 381h3v3h-3zM380 380h3v3h-3zM381 380h3v3h-3zM382 379h3v3h-3zM383 378h3v3h-3zM384 378h3v3h-3zM384 377h3v3h-3zM385 376h3v3h-3zM386 375h3v3h-3zM387 375h3v3h-3zM388 374h3v3h-3zM389 373h3v3h-3zM390 373h3v3h-3zM390 372h3v3h-3zM391 371h3v3h-3zM392 370h3v3h-3zM393 370h3v3h-3zM394 369h3v3h-3zM395 368h3v3h-3zM395 367h3v3h-3zM396 367h3v3h-3zM397 366h3v3h-3zM398 365h3v3h-3zM399 365h3v3h-3zM400 364h3v3h-3zM401 363h3v3h-3zM401 363h3v3h-3zM402 362h3v3h-3zM403 361h3v3h-3zM404 360h3v3h-3zM405 360h3v3h-3zM406 359h3v3h-3zM407 358h3v3h-3zM407 358h3v3h-3zM408 357h3v3h-3zM409 356h3v3h-3zM410 355h3v3h-3zM411 355h3v3h-3zM412 354h3v3h-3zM412 353h3v3h-3zM413 353h3v3h-3zM414 352h3v3h-3zM415 351h3v3h-3zM416 351h3v3h-3zM417 350h3v3h-3zM418 349h3v3h-3zM418 349h3v3h-3zM419 348h3v3h-3zM420 347h3v3h-3zM421 346h3v3h-3zM422 346h3v3h-3zM423 345h3v3h-3zM423 344h3v3h-3zM424 344h3v3h-3zM425 343h3v3h-3zM426 342h3v3h-3zM427 342h3v3h-3zM428 341h3v3h-3zM429 340h3v3h-3zM429 340h3v3h-3zM430 339h3v3h-3zM431 338h3v3h-3zM432 338h3v3h-3zM433 337h3v3h-3zM434 336h3v3h-3zM435 336h3v3h-3zM435 335h3v3h-3zM436 334h3v3h-3zM437 333h3v3h-3zM438 333h3v3h-3zM439 332h3v3h-3zM440 331h3v3h-3zM440 331h3v3h-3zM441 330h3v3h-3zM442 329h3v3h-3zM443 329h3v3h-3zM444 328h3v3h-3zM445 327h3v3h-3zM446 327h3v3h-3zM446 326h3v3h-3zM447 325h3v3h-3zM448 325h3v3h-3zM449 324h3v3h-3zM450 323h3v3h-3zM451 323h3v3h-3zM451 322h3v3h-3zM452 321h3v3h-3zM453 321h3v3h-3zM454 320h3v3h-3zM455 319h3v3h-3zM456 319h3v3h-3zM457 318h3v3h-3zM457 317h3v3h-3zM458 317h3v3h-3zM459 316h3v3h-3zM460 316h3v3h-3zM461 315h3v3h-3zM462 314h3v3h-3zM463 314h3v3h-3zM463 313h3v3h-3zM464 312h3v3h-3zM465 312h3v3h-3zM466 311h3v3h-3zM467 310h3v3h-3zM468 310h3v3h-3zM468 309h3v3h-3zM469 308h3v3h-3zM470 308h3v3h-3zM471 307h3v3h-3zM472 306h3v3h-3zM473 306h3v3h-3zM474 305h3v3h-3zM474 304h3v3h-3zM475 304h3v3h-3zM476 303h3v3h-3zM477 303h3v3h-3zM478 302h3v3h-3zM479 301h3v3h-3zM479 301h3v3h-3zM480 300h3v3h-3zM481 299h3v3h-3zM482 299h3v3h-3zM483 298h3v3h-3zM484 297h3v3h-3zM485 297h3v3h-3zM485 296h3v3h-3zM486 296h3v3h-3zM487 295h3v3h-3zM488 294h3v3h-3zM489 294h3v3h-3zM490 293h3v3h-3zM491 292h3v3h-3zM491 292h3v3h-3zM492 291h3v3h-3zM493 291h3v3h-3zM494 290h3v3h-3zM495 289h3v3h-3zM496 289h3v3h-3zM496 288h3v3h-3zM497 287h3v3h-3zM498 287h3v3h-3zM499 286h3v3h-3zM500 286h3v3h-3zM501 285h3v3h-3zM502 284h3v3h-3zM502 284h3v3h-3zM503 283h3v3h-3zM504 282h3v3h-3zM505 282h3v3h-3zM506 281h3v3h-3zM507 281h3v3h-3zM508 280h3v3h-3zM508 279h3v3h-3zM509 279h3v3h-3zM510 278h3v3h-3zM511 278h3v3h-3zM512 277h3v3h-3zM513 276h3v3h-3zM513 276h3v3h-3zM514 275h3v3h-3zM515 274h3v3h-3zM516 274h3v3h-3zM517 273h3v3h-3zM518 273h3v3h-3zM519 272h3v3h-3zM519 271h3v3h-3zM520 271h3v3h-3zM521 270h3v3h-3zM522 270h3v3h-3zM523 269h3v3h-3zM524 268h3v3h-3zM524 268h3v3h-3zM525 267h3v3h-3zM526 267h3v3h-3zM527 266h3v3h-3zM528 265h3v3h-3zM529 265h3v3h-3zM530 264h3v3h-3zM530 264h3v3h-3zM531 263h3v3h-3zM532 262h3v3h-3zM533 262h3v3h-3zM534 261h3v3h-3zM535 261h3v3h-3zM536 260h3v3h-3zM536 259h3v3h-3zM537 259h3v3h-3zM538 258h3v3h-3zM539 258h3v3h-3zM540 257h3v3h-3zM541 257h3v3h-3zM541 256h3v3h-3zM542 255h3v3h-3zM543 255h3v3h-3zM544 254h3v3h-3zM545 254h3v3h-3zM546 253h3v3h-3zM547 252h3v3h-3zM547 252h3v3h-3zM548 251h3v3h-3zM549 251h3v3h-3zM550 250h3v3h-3zM551 249h3v3h-3zM552 249h3v3h-3zM552 248h3v3h-3zM553 248h3v3h-3zM554 247h3v3h-3zM555 247h3v3h-3zM556 246h3v3h-3zM557 245h3v3h-3zM558 245h3v3h-3zM558 244h3v3h-3zM559 244h3v3h-3zM560 243h3v3h-3zM561 243h3v3h-3zM562 242h3v3h-3zM563 241h3v3h-3zM564 241h3v3h-3zM564 240h3v3h-3zM565 240h3v3h-3zM566 239h3v3h-3zM567 239h3v3h-3zM568 238h3v3h-3zM569 237h3v3h-3zM569 237h3v3h-3zM570 236h3v3h-3zM571 236h3v3h-3zM572 235h3v3h-3zM573 235h3v3h-3zM574 234h3v3h-3zM575 233h3v3h-3zM575 233h3v3h-3zM576 232h3v3h-3zM577 232h3v3h-3zM578 231h3v3h-3zM579 231h3v3h-3zM580 230h3v3h-3zM580 230h3v3h-3zM581 229h3v3h-3zM582 228h3v3h-3zM583 228h3v3h-3zM584 227h3v3h-3zM585 227h3v3h-3zM586 226h3v3h-3zM586 226h3v3h-3zM587 225h3v3h-3zM588 225h3v3h-3zM589 224h3v3h-3zM590 223h3v3h-3zM591 223h3v3h-3zM592 222h3v3h-3zM592 222h3v3h-3zM593 221h3v3h-3zM594 221h3v3h-3zM595 220h3v3h-3zM596 220h3v3h-3zM597 219h3v3h-3zM597 219h3v3h-3zM598 218h3v3h-3zM599 217h3v3h-3zM600 217h3v3h-3zM601 216h3v3h-3zM602 216h3v3h-3zM603 215h3v3h-3zM603 215h3v3h-3zM604 214h3v3h-3zM605 214h3v3h-3zM606 213h3v3h-3zM607 213h3v3h-3zM608 212h3v3h-3zM608 211h3v3h-3zM609 211h3v3h-3zM610 210h3v3h-3zM611 210h3v3h-3zM612 209h3v3h-3zM613 209h3v3h-3zM614 208h3v3h-3zM614 208h3v3h-3zM615 207h3v3h-3zM616 207h3v3h-3zM617 206h3v3h-3zM618 206h3v3h-3zM619 205h3v3h-3zM620 205h3v3h-3zM620 204h3v3h-3zM621 203h3v3h-3zM622 203h3v3h-3zM623 202h3v3h-3zM624 202h3v3h-3zM625 201h3v3h-3zM625 201h3v3h-3zM626 200h3v3h-3zM627 200h3v3h-3zM628 199h3v3h-3zM629 199h3v3h-3zM630 198h3v3h-3zM631 198h3v3h-3zM631 197h3v3h-3zM632 197h3v3h-3zM633 196h3v3h-3zM634 196h3v3h-3zM635 195h3v3h-3zM636 195h3v3h-3zM636 194h3v3h-3zM637 194h3v3h-3zM638 193h3v3h-3zM639 193h3v3h-3zM640 192h3v3h-3zM641 191h3v3h-3zM642 191h3v3h-3zM642 190h3v3h-3zM643 190h3v3h-3zM644 189h3v3h-3zM645 189h3v3h-3zM646 188h3v3h-3zM647 188h3v3h-3zM648 187h3v3h-3zM648 187h3v3h-3zM649 186h3v3h-3zM650 186h3v3h-3zM651 185h3v3h-3zM652 185h3v3h-3zM653 184h3v3h-3zM653 184h3v3h-3zM654 183h3v3h-3zM655 183h3v3h-3zM656 182h3v3h-3zM657 182h3v3h-3zM658 181h3v3h-3zM659 181h3v3h-3zM659 180h3v3h-3zM660 180h3v3h-3zM661 179h3v3h-3zM662 179h3v3h-3zM663 178h3v3h-3zM664 178h3v3h-3zM665 177h3v3h-3zM665 177h3v3h-3zM666 176h3v3h-3zM667 176h3v3h-3zM668 175h3v3h-3zM669 175h3v3h-3zM670 174h3v3h-3zM670 174h3v3h-3zM671 173h3v3h-3zM672 173h3v3h-3zM673 172h3v3h-3zM674 172h3v3h-3zM675 171h3v3h-3zM676 171h3v3h-3zM676 170h3v3h-3zM677 170h3v3h-3zM678 169h3v3h-3zM679 169h3v3h-3zM680 168h3v3h-3zM681 168h3v3h-3zM681 167h3v3h-3zM682 167h3v3h-3zM683 166h3v3h-3zM684 166h3v3h-3zM685 165h3v3h-3zM686 165h3v3h-3zM687 164h3v3h-3zM687 164h3v3h-3zM688 164h3v3h-3zM689 163h3v3h-3zM690 163h3v3h-3zM691 162h3v3h-3zM692 162h3v3h-3zM693 161h3v3h-3z"/>
</g>
<rect x="198" y="144" width="1" height="463" fill="#5a5a5a"/>
<rect x="198" y="606" width="496" height="1" fill="#4a4a4a"/>
<rect x="193" y="606" width="5" height="1" fill="#4a4a4a"/>
<text x="193.3" y="609.8" text-anchor="end" class="tk" textLength="30.0" lengthAdjust="spacingAndGlyphs">6e+8</text>
<rect x="193" y="578" width="5" height="1" fill="#4a4a4a"/>
<text x="193.3" y="581.8" text-anchor="end" class="tk" textLength="30.0" lengthAdjust="spacingAndGlyphs">7e+8</text>
<rect x="193" y="549" width="5" height="1" fill="#4a4a4a"/>
<text x="193.3" y="552.8" text-anchor="end" class="tk" textLength="30.0" lengthAdjust="spacingAndGlyphs">8e+8</text>
<rect x="193" y="520" width="5" height="1" fill="#4a4a4a"/>
<text x="193.3" y="523.8" text-anchor="end" class="tk" textLength="30.0" lengthAdjust="spacingAndGlyphs">9e+8</text>
<rect x="193" y="491" width="5" height="1" fill="#4a4a4a"/>
<text x="193.3" y="494.8" text-anchor="end" class="tk" textLength="30.0" lengthAdjust="spacingAndGlyphs">1e+9</text>
<rect x="193" y="462" width="5" height="1" fill="#4a4a4a"/>
<text x="193.3" y="465.8" text-anchor="end" class="tk" textLength="37.4" lengthAdjust="spacingAndGlyphs">1.1e+9</text>
<rect x="193" y="434" width="5" height="1" fill="#4a4a4a"/>
<text x="193.3" y="437.8" text-anchor="end" class="tk" textLength="37.4" lengthAdjust="spacingAndGlyphs">1.2e+9</text>
<rect x="193" y="405" width="5" height="1" fill="#4a4a4a"/>
<text x="193.3" y="408.8" text-anchor="end" class="tk" textLength="37.4" lengthAdjust="spacingAndGlyphs">1.3e+9</text>
<rect x="193" y="375" width="5" height="1" fill="#4a4a4a"/>
<text x="193.3" y="378.8" text-anchor="end" class="tk" textLength="37.4" lengthAdjust="spacingAndGlyphs">1.4e+9</text>
<rect x="193" y="346" width="5" height="1" fill="#4a4a4a"/>
<text x="193.3" y="349.8" text-anchor="end" class="tk" textLength="37.4" lengthAdjust="spacingAndGlyphs">1.5e+9</text>
<rect x="193" y="317" width="5" height="1" fill="#4a4a4a"/>
<text x="193.3" y="320.8" text-anchor="end" class="tk" textLength="37.4" lengthAdjust="spacingAndGlyphs">1.6e+9</text>
<rect x="193" y="289" width="5" height="1" fill="#4a4a4a"/>
<text x="193.3" y="292.8" text-anchor="end" class="tk" textLength="37.4" lengthAdjust="spacingAndGlyphs">1.7e+9</text>
<rect x="193" y="260" width="5" height="1" fill="#4a4a4a"/>
<text x="193.3" y="263.8" text-anchor="end" class="tk" textLength="37.4" lengthAdjust="spacingAndGlyphs">1.8e+9</text>
<rect x="193" y="231" width="5" height="1" fill="#4a4a4a"/>
<text x="193.3" y="234.8" text-anchor="end" class="tk" textLength="37.4" lengthAdjust="spacingAndGlyphs">1.9e+9</text>
<rect x="193" y="202" width="5" height="1" fill="#4a4a4a"/>
<text x="193.3" y="205.8" text-anchor="end" class="tk" textLength="30.0" lengthAdjust="spacingAndGlyphs">2e+9</text>
<rect x="193" y="173" width="5" height="1" fill="#4a4a4a"/>
<text x="193.3" y="176.8" text-anchor="end" class="tk" textLength="37.4" lengthAdjust="spacingAndGlyphs">2.1e+9</text>
<rect x="193" y="144" width="5" height="1" fill="#4a4a4a"/>
<text x="193.3" y="147.8" text-anchor="end" class="tk" textLength="37.4" lengthAdjust="spacingAndGlyphs">2.2e+9</text>
<rect x="198" y="606" width="1" height="6" fill="#4a4a4a"/>
<text x="198.5" y="621" text-anchor="middle" class="tk">0</text>
<rect x="268" y="606" width="1" height="6" fill="#4a4a4a"/>
<text x="268.5" y="621" text-anchor="middle" class="tk">0.01</text>
<rect x="339" y="606" width="1" height="6" fill="#4a4a4a"/>
<text x="339.5" y="621" text-anchor="middle" class="tk">0.02</text>
<rect x="409" y="606" width="1" height="6" fill="#4a4a4a"/>
<text x="409.5" y="621" text-anchor="middle" class="tk">0.03</text>
<rect x="481" y="606" width="1" height="6" fill="#4a4a4a"/>
<text x="481.5" y="621" text-anchor="middle" class="tk">0.04</text>
<rect x="551" y="606" width="1" height="6" fill="#4a4a4a"/>
<text x="551.5" y="621" text-anchor="middle" class="tk">0.05</text>
<rect x="622" y="606" width="1" height="6" fill="#4a4a4a"/>
<text x="622.5" y="621" text-anchor="middle" class="tk">0.06</text>
<rect x="693" y="606" width="1" height="6" fill="#4a4a4a"/>
<text x="693.5" y="621" text-anchor="middle" class="tk">0.07</text>
<text x="446.3" y="641" text-anchor="middle" class="ttl" textLength="47.5" lengthAdjust="spacingAndGlyphs">Strain</text>
<text transform="translate(147.6 374.3) rotate(-90)" x="0" y="0" text-anchor="middle" class="ttl" textLength="96.5" lengthAdjust="spacingAndGlyphs">Predictions</text>
<rect x="198.5" y="144.5" width="111" height="56" fill="#ffffff" fill-opacity="0.85" stroke="#3a3a3a" stroke-width="1"/>
<rect x="212" y="151.5" width="6.5" height="7" rx="1.2" fill="#0000ff"/>
<text x="228.6" y="159" class="lg" textLength="76.5" lengthAdjust="spacingAndGlyphs">Observations</text>
<rect x="212" y="168.5" width="6.5" height="7" rx="1.2" fill="#ff0000"/>
<text x="228.6" y="176" class="lg" textLength="29" lengthAdjust="spacingAndGlyphs">Initial</text>
<rect x="212" y="185.5" width="6.5" height="7" rx="1.2" fill="#00ff00"/>
<text x="228.6" y="193" class="lg" textLength="63" lengthAdjust="spacingAndGlyphs">Calibrated</text>
</svg>
</body></html>
